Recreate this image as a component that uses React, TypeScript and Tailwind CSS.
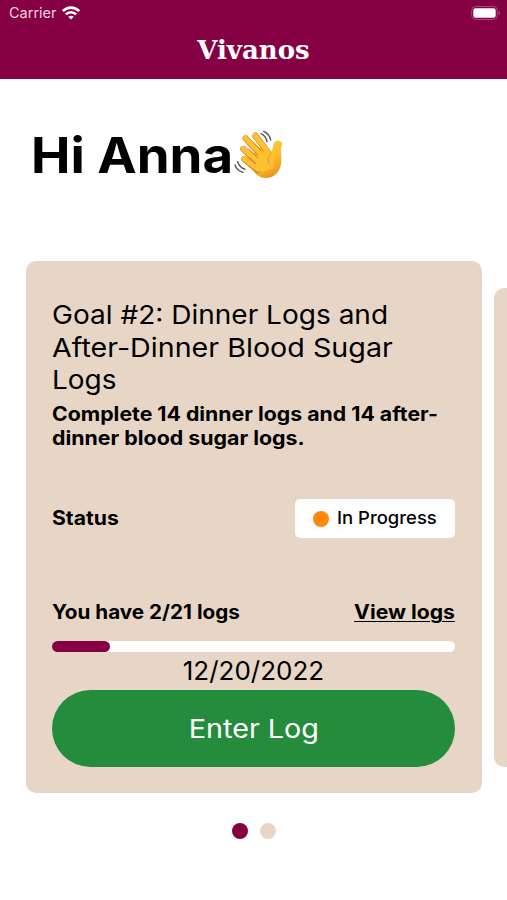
function WavingHand() {
  return (
    <svg className="ml-[14px] size-[52px] shrink-0" viewBox="40 30 156 156" fill="none" strokeLinecap="round" strokeLinejoin="round">
      <defs>
        <linearGradient id="skin" x1="80" y1="40" x2="160" y2="175" gradientUnits="userSpaceOnUse">
          <stop stopColor="#ffcf3d" />
          <stop offset="0.65" stopColor="#fdbd2b" />
          <stop offset="1" stopColor="#e8921d" />
        </linearGradient>
      </defs>
      <path d="M104 92 C112 84 138 76 149 92 C153 99 157 95 160 82 C162 68 166 61 177 62 C188 64 188 72 185 82 C182 99 188 120 183 138 C177 161 157 176 136 174 C118 173 106 161 98 149 Z" fill="url(#skin)" />
      <g stroke="#d58b1c" strokeWidth="19">
        <path d="M107 47 L145 98" />
        <path d="M78 55 L130 112" />
        <path d="M71 87 L120 132" />
        <path d="M74 117 L114 150" />
      </g>
      <g stroke="#fdc133" strokeWidth="15">
        <path d="M106 46 L146 98" />
        <path d="M77 54 L133 112" />
        <path d="M70 86 L124 132" />
        <path d="M73 116 L116 148" />
      </g>
      <path d="M115 108 L143 91 L158 112 L158 142 L127 154 L110 139 Z" fill="#fdc032" stroke="#fdc032" strokeWidth="6" />
      <path d="M101 66 L124 92 M88 86 L113 113 M90 113 L108 130" stroke="#d0841c" strokeWidth="3" />
      <path d="M152 101 C146 110 144 119 148 131" stroke="#e59b20" strokeWidth="3" />
      <path d="M124 41 C134 46 140 54 142 65 M132 34 C144 39 151 49 153 60" stroke="#4d5357" strokeWidth="4" />
      <path d="M54 125 C58 137 65 144 76 148 M46 135 C50 147 59 154 70 157" stroke="#4d5357" strokeWidth="4" />
    </svg>
  );
}

function StatusBar() {
  return (
    <div className="flex h-[26px] items-center justify-between pl-[9px] pr-[6px]">
      <div className="flex items-center gap-[6px]">
        <span className="w-[47px] text-[14.5px] leading-none text-[#ecd3df]">Carrier</span>
        <svg className="h-[14px] w-[18px]" viewBox="0 0 18 14" fill="none" stroke="#fff" strokeWidth="2.7">
          <path d="M0.9 5.1 C5.4 0.5 12.6 0.5 17.1 5.1" />
          <path d="M3.9 8.4 C6.8 5.5 11.2 5.5 14.1 8.4" />
          <path d="M9 13.6 L6.2 10.8 C7.8 9.3 10.2 9.3 11.8 10.8 Z" fill="#fff" stroke="none" />
        </svg>
      </div>
      <svg className="h-[14px] w-[30px]" viewBox="0 0 30 14">
        <rect x="0.7" y="0.5" width="25.6" height="13" rx="4" fill="none" stroke="#a84a79" />
        <rect x="2.3" y="2.2" width="22.4" height="9.6" rx="2.2" fill="#fff" />
        <path d="M27.7 4.8 C29.5 5.7 29.5 8.3 27.7 9.2 Z" fill="#a84a79" />
      </svg>
    </div>
  );
}

function GoalCard() {
  return (
    <section className="flex h-[532px] w-[456px] shrink-0 flex-col rounded-[10px] bg-[#e7d6c6] pt-[38px] pr-[27px] pl-[26px]">
      <h2 className="text-[26px] leading-[32.5px] whitespace-nowrap">
        <span className="block origin-left scale-x-[1.078]">Goal #2: Dinner Logs and</span>
        <span className="block origin-left scale-x-[1.103]">After-Dinner Blood Sugar</span>
        <span className="block origin-left scale-x-[1.075]">Logs</span>
      </h2>
      <p className="mt-[5px] text-[19.5px] leading-[24.5px] font-bold whitespace-nowrap">
        <span className="block origin-left scale-x-[1.091]">Complete 14 dinner logs and 14 after-</span>
        <span className="block origin-left scale-x-[1.095]">dinner blood sugar logs.</span>
      </p>
      <div className="mt-[48px] flex h-10 items-center justify-between">
        <span className="origin-left scale-x-[1.085] text-[19.5px] font-bold">Status</span>
        <div className="flex h-[39px] w-[160px] items-center rounded-[5px] bg-white pl-[18px]">
          <span className="mr-[8px] size-4 rounded-full bg-[#ff870b]" />
          <span className="origin-left scale-x-[1.055] text-[17.5px] font-medium">In Progress</span>
        </div>
      </div>
      <div className="mt-[61px] flex h-[26px] items-center justify-between text-[19.5px] font-bold">
        <span className="origin-left scale-x-[1.06]">You have 2/21 logs</span>
        <a className="origin-right scale-x-[1.085] underline decoration-1 underline-offset-2">View logs</a>
      </div>
      <div className="mt-[15px] h-[11px] rounded-full bg-white">
        <div className="h-full w-[58px] rounded-full bg-[#860044]" />
      </div>
      <div className="h-[38px] text-center text-[26px] leading-[38px]">12/20/2022</div>
      <button className="h-[77px] rounded-full bg-[#248c3c] text-[26px] text-white">
        <span className="inline-block scale-x-[1.105]">Enter Log</span>
      </button>
    </section>
  );
}

export default function App() {
  return (
    <div className="h-[900px] w-[507px] overflow-hidden bg-white font-['Inter',sans-serif] text-black">
      <header className="h-[79px] bg-[#860044]">
        <StatusBar />
        <h1 className="text-center font-['DejaVu_Serif',serif] text-[26px] leading-[49px] font-bold text-white">Vivanos</h1>
      </header>
      <div className="flex h-[182px] items-start pt-[51px] pl-[31px]">
        <span className="origin-left scale-x-[1.078] text-[49px] leading-[52px] font-bold">Hi Anna</span>
        <WavingHand />
      </div>
      <main className="flex items-center gap-3 pl-[26px]">
        <GoalCard />
        <section className="h-[479px] w-[456px] shrink-0 rounded-[10px] bg-[#e7d6c6]" />
      </main>
      <div className="mt-[30px] flex justify-center gap-3">
        <span className="size-4 rounded-full bg-[#860044]" />
        <span className="size-4 rounded-full bg-[#e7d6c6]" />
      </div>
    </div>
  );
}
